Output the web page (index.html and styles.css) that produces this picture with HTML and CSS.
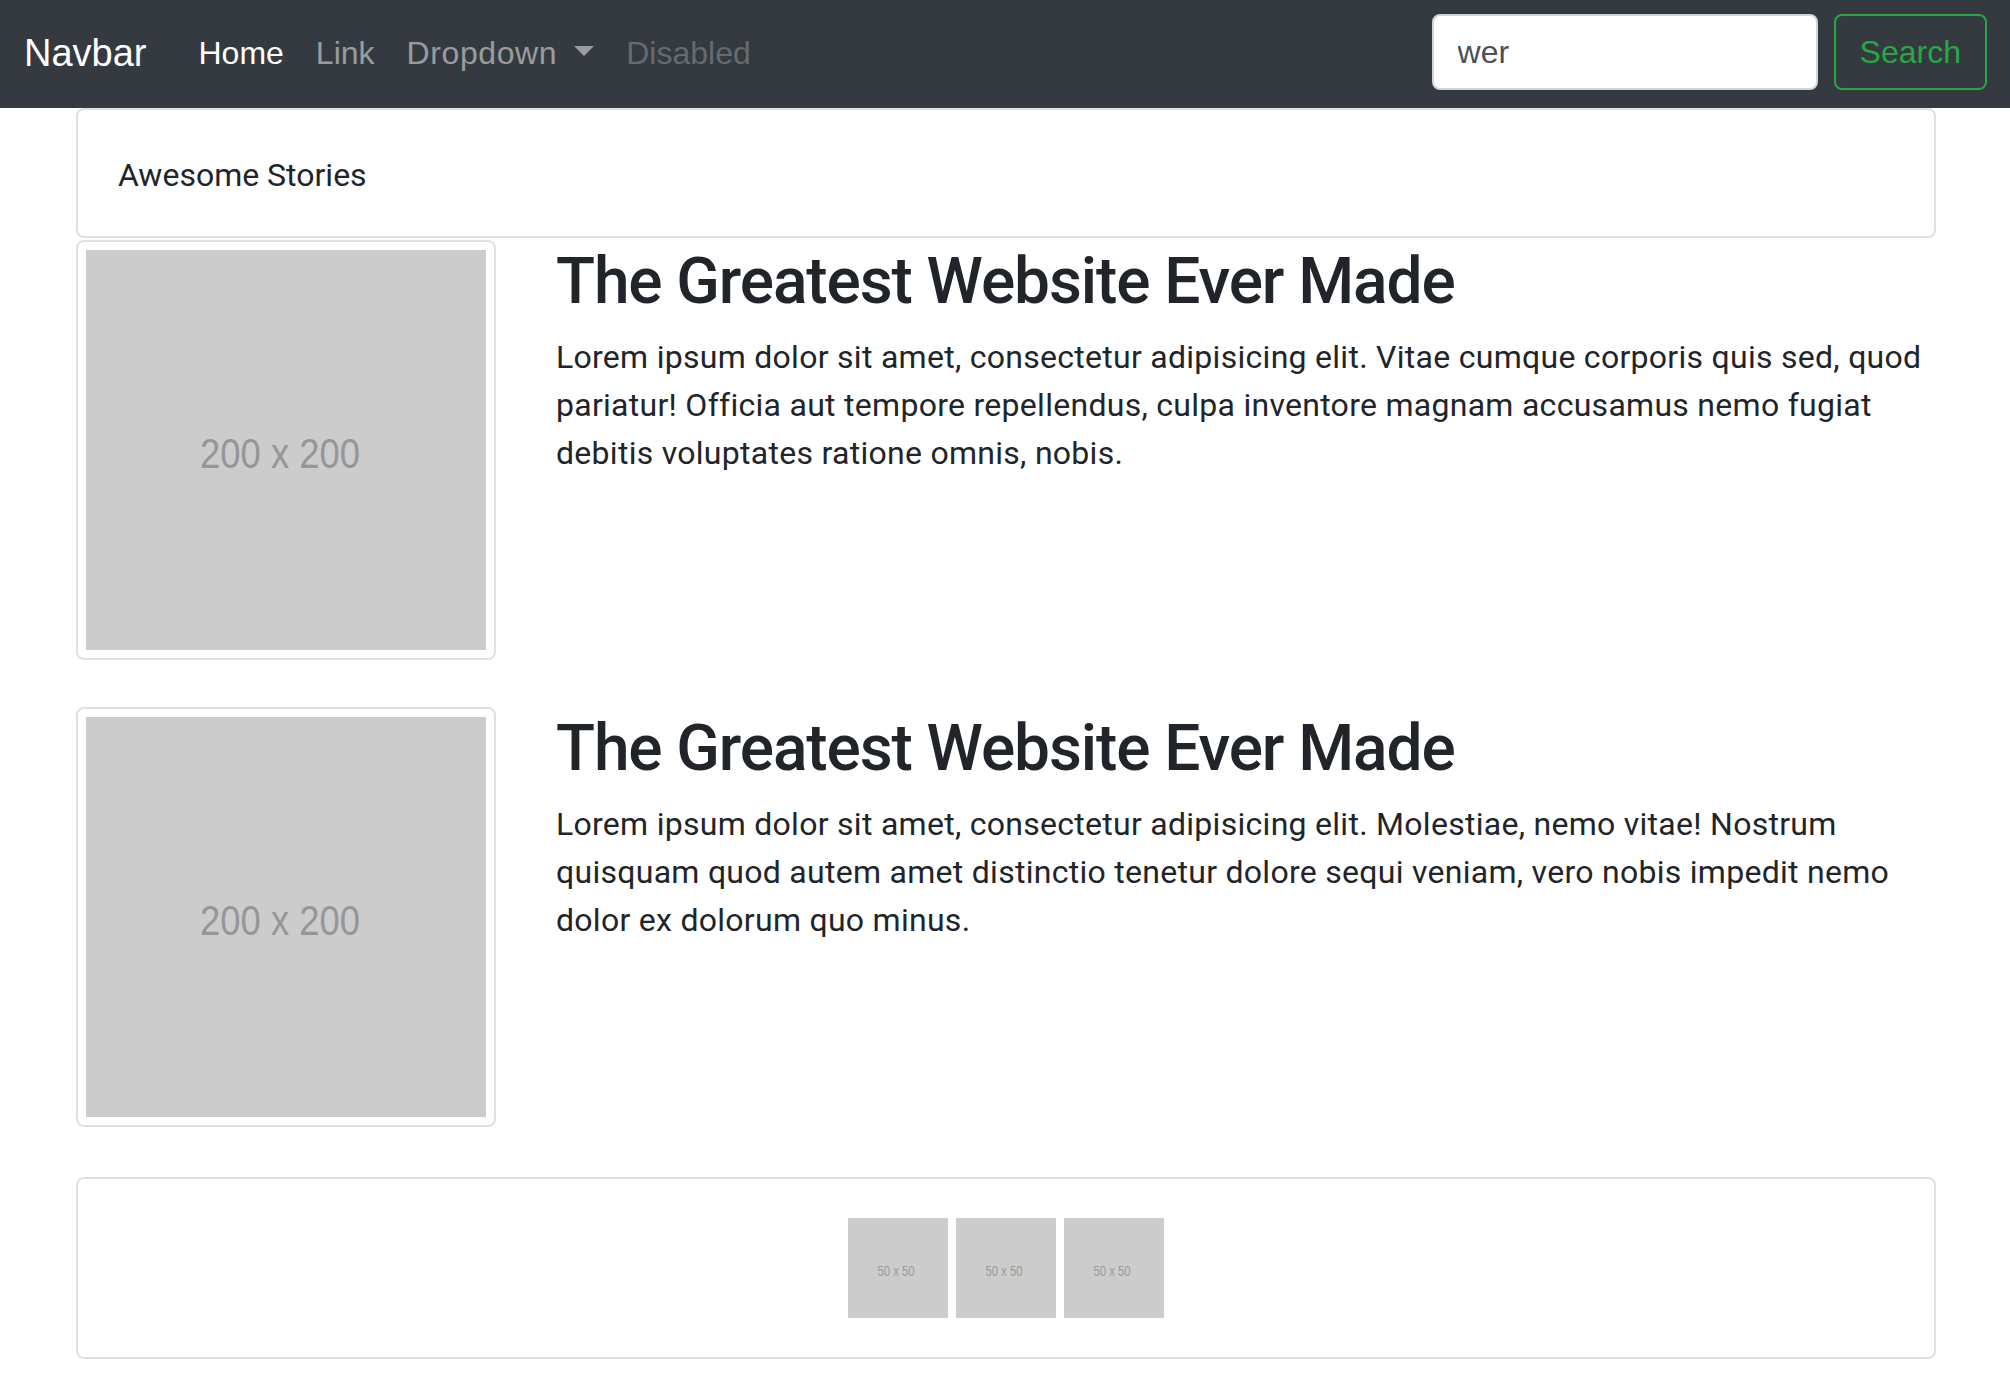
FILE: index.html
```html
<!DOCTYPE html>
<html lang="en">
<head>
<meta charset="utf-8">
<title>Awesome Stories</title>
<link rel="stylesheet" href="styles.css">
</head>
<body>
<nav class="navbar">
  <a class="brand" href="#">Navbar</a>
  <ul class="nav">
    <li><a class="nav-link active" href="#">Home</a></li>
    <li><a class="nav-link" href="#">Link</a></li>
    <li><a class="nav-link dropdown" href="#">Dropdown<span class="caret"></span></a></li>
    <li><a class="nav-link disabled" href="#">Disabled</a></li>
  </ul>
  <form class="search">
    <input class="search-input" type="search" value="wer">
    <button class="search-btn" type="button">Search</button>
  </form>
</nav>

<main class="container">
  <div class="card header-card">
    <div class="card-body">Awesome Stories</div>
  </div>

  <div class="media first">
    <div class="thumb">
      <svg class="ph-big" width="400" height="400" viewBox="0 0 400 400">
        <rect width="400" height="400" fill="#cccccc"/>
        <text x="194" y="218" text-anchor="middle" textLength="160" lengthAdjust="spacingAndGlyphs" class="ph-text-big">200 x 200</text>
      </svg>
    </div>
    <div class="media-body">
      <h2 class="title">The Greatest Website Ever Made</h2>
      <p class="text">Lorem ipsum dolor sit amet, consectetur adipisicing elit. Vitae cumque corporis quis sed, quod pariatur! Officia aut tempore repellendus, culpa inventore magnam accusamus nemo fugiat debitis voluptates ratione omnis, nobis.</p>
    </div>
  </div>

  <div class="media">
    <div class="thumb">
      <svg class="ph-big" width="400" height="400" viewBox="0 0 400 400">
        <rect width="400" height="400" fill="#cccccc"/>
        <text x="194" y="218" text-anchor="middle" textLength="160" lengthAdjust="spacingAndGlyphs" class="ph-text-big">200 x 200</text>
      </svg>
    </div>
    <div class="media-body">
      <h2 class="title">The Greatest Website Ever Made</h2>
      <p class="text">Lorem ipsum dolor sit amet, consectetur adipisicing elit. Molestiae, nemo vitae! Nostrum quisquam quod autem amet distinctio tenetur dolore sequi veniam, vero nobis impedit nemo dolor ex dolorum quo minus.</p>
    </div>
  </div>

  <div class="card footer-card">
    <div class="card-body thumbs">
      <svg class="ph-small" width="100" height="100" viewBox="0 0 100 100"><rect width="100" height="100" fill="#cccccc"/><text x="48" y="58" text-anchor="middle" textLength="37" lengthAdjust="spacingAndGlyphs" class="ph-text-small">50 x 50</text></svg>
      <svg class="ph-small" width="100" height="100" viewBox="0 0 100 100"><rect width="100" height="100" fill="#cccccc"/><text x="48" y="58" text-anchor="middle" textLength="37" lengthAdjust="spacingAndGlyphs" class="ph-text-small">50 x 50</text></svg>
      <svg class="ph-small" width="100" height="100" viewBox="0 0 100 100"><rect width="100" height="100" fill="#cccccc"/><text x="48" y="58" text-anchor="middle" textLength="37" lengthAdjust="spacingAndGlyphs" class="ph-text-small">50 x 50</text></svg>
    </div>
  </div>
</main>
</body>
</html>
```
FILE: styles.css
```css
* { box-sizing: border-box; }

body {
  margin: 0;
  font-family: Roboto, "Liberation Sans", Arial, sans-serif;
  color: #212529;
  background: #fff;
}

.navbar {
  display: flex;
  align-items: center;
  height: 108px;
  padding: 0 23px 4px 24px;
  background: #343a40;
  font-family: "Liberation Sans", Arial, sans-serif;
}

.brand {
  font-size: 38px;
  color: #fff;
  text-decoration: none;
  margin-right: 36px;
  padding-top: 2px;
}

.nav {
  display: flex;
  list-style: none;
  margin: 0;
  padding: 2px 0 0;
}

.nav-link {
  display: block;
  padding: 0 16px;
  font-size: 32px;
  line-height: 48px;
  color: rgba(255, 255, 255, 0.5);
  text-decoration: none;
}

.nav-link.active { color: #fff; }
.nav-link.disabled { color: rgba(255, 255, 255, 0.25); }

.nav-link.dropdown { letter-spacing: 0.6px; }

.caret {
  display: inline-block;
  margin-left: 17px;
  vertical-align: 8px;
  border-top: 10px solid currentColor;
  border-left: 10px solid transparent;
  border-right: 10px solid transparent;
}

.search {
  display: flex;
  margin-left: auto;
  gap: 16px;
}

.search-input {
  width: 386px;
  height: 76px;
  padding: 0 24px;
  border: 2px solid #ced4da;
  border-radius: 8px;
  font-family: "Liberation Sans", Arial, sans-serif;
  font-size: 32px;
  color: #495057;
  background: #fff;
  outline: none;
}

.search-btn {
  height: 76px;
  padding: 0 24px;
  border: 2px solid #28a745;
  border-radius: 8px;
  background: transparent;
  color: #28a745;
  font-family: "Liberation Sans", Arial, sans-serif;
  font-size: 32px;
}

.container {
  margin: 0 74px 0 76px;
}

.card {
  border: 2px solid #dfe0e2;
  border-radius: 8px;
}

.card-body {
  padding: 39px 40px;
  font-size: 32px;
  line-height: 48px;
}

.header-card .card-body { padding-top: 41px; padding-bottom: 37px; }

.media {
  display: flex;
  align-items: flex-start;
  margin-top: 47px;
}

.media.first { margin-top: 2px; }

.thumb {
  flex: none;
  padding: 8px;
  border: 2px solid #dee2e6;
  border-radius: 8px;
  background: #fff;
  line-height: 0;
}

.ph-big, .ph-small { display: block; }

.ph-text-big {
  font-family: "Liberation Sans", Arial, sans-serif;
  font-size: 42px;
  fill: #969696;
}

.ph-text-small {
  font-family: "Liberation Sans", Arial, sans-serif;
  font-size: 14px;
  fill: #9a9a9a;
}

.media-body {
  flex: 1;
  margin-left: 60px;
}

.title {
  margin: 0 0 13px;
  padding-top: 3px;
  font-size: 64px;
  font-weight: 500;
  line-height: 77px;
  letter-spacing: -1.1px;
}

.text {
  margin: 0;
  font-size: 32px;
  line-height: 48px;
  letter-spacing: 0.28px;
}

.footer-card { margin-top: 50px; }

.thumbs {
  display: flex;
  justify-content: center;
  gap: 8px;
  padding: 39px 40px;
  line-height: 0;
}
```
